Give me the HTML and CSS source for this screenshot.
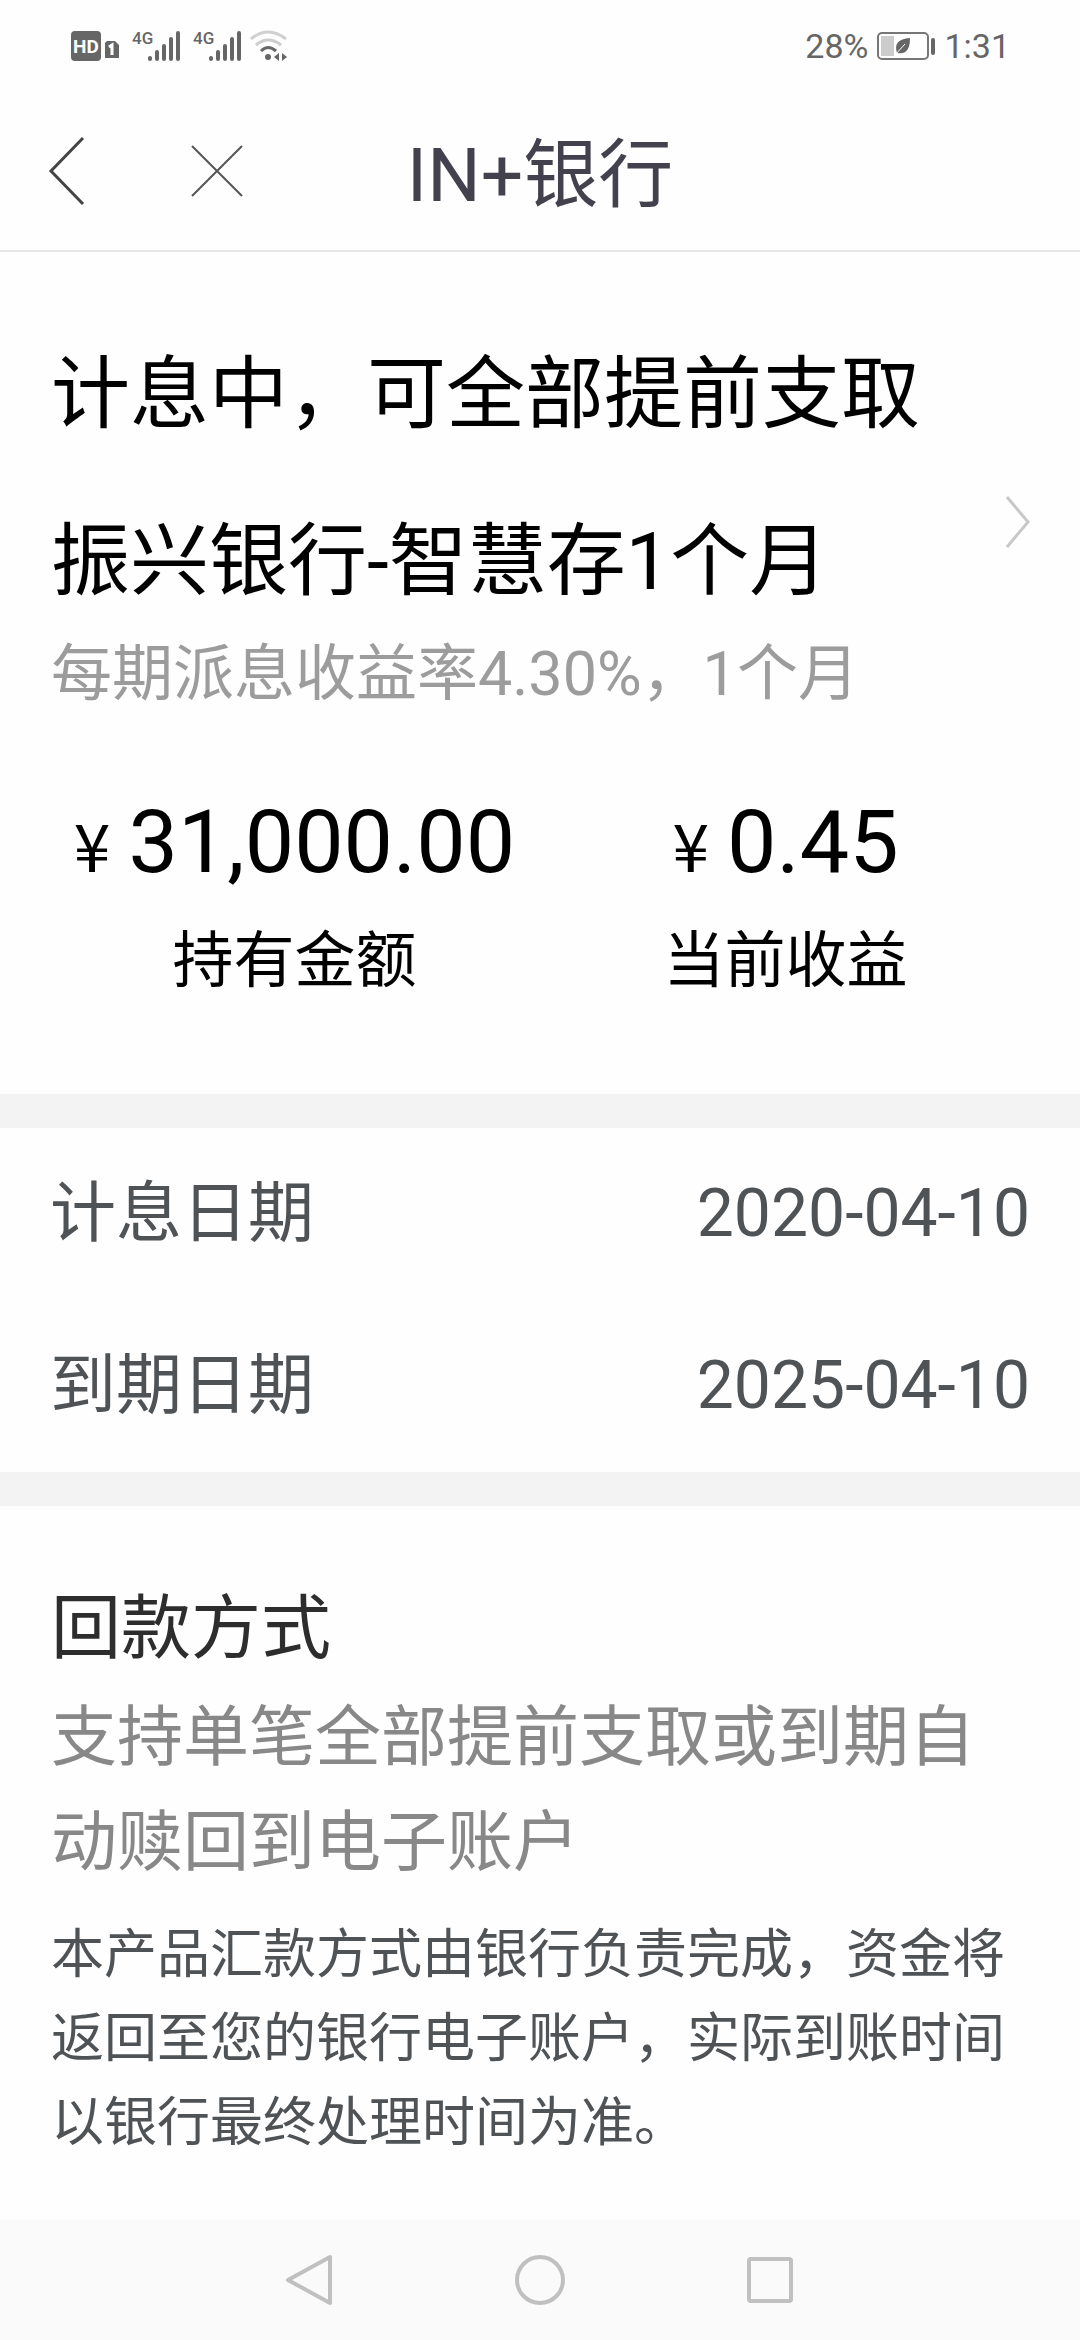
FILE: index.html
```html
<!DOCTYPE html>
<html lang="zh-CN">
<head>
    <meta charset="UTF-8">
    <meta name="viewport" content="width=device-width, initial-scale=1.0">
    <title>IN+银行</title>
    <link rel="stylesheet" href="styles.css">
</head>
<body>
    <!-- 状态栏 -->
    <div class="status-bar">
        <div class="status-left">
            <svg class="icon-hd" width="50" height="32" viewBox="0 0 50 32">
                <rect x="1" y="1" width="30" height="30" rx="4" fill="#666"/>
                <text x="16" y="23" text-anchor="middle" class="hd-text">HD</text>
                <path d="M37 11h8l4 4v13h-14v-15z" fill="#666"/>
                <path d="M39 17l3-2v10" fill="none" stroke="#fff" stroke-width="3"/>
            </svg>
            <div class="signal">
                <span>4G</span>
                <svg width="34" height="32" viewBox="0 0 34 32" stroke="#666" stroke-width="4" stroke-linecap="round">
                    <path d="M3 28v1M10 22v7M17 16v13M24 9v20M31 3v26"/>
                </svg>
            </div>
            <div class="signal">
                <span>4G</span>
                <svg width="34" height="32" viewBox="0 0 34 32" stroke="#666" stroke-width="4" stroke-linecap="round">
                    <path d="M3 28v1M10 22v7M17 16v13M24 9v20M31 3v26"/>
                </svg>
            </div>
            <svg class="icon-wifi" width="38" height="32" viewBox="0 0 38 32" fill="none" stroke-width="3">
                <path d="M1 9Q18-5 36 9" stroke="#d0d0d0"/>
                <path d="M6 15Q18 5 31 15" stroke="#ccc"/>
                <path d="M11 21Q18 14 26 21" stroke="#666"/>
                <circle cx="18" cy="27" r="3" fill="#666"/>
                <path d="M29 23v8l-5-4zM32 23v8l5-4z" fill="#666"/>
            </svg>
        </div>
        <div class="status-right">
            <span>28%</span>
            <svg width="60" height="30" viewBox="0 0 60 30">
                <rect x="2" y="2" width="50" height="26" rx="4" fill="none" stroke="#777" stroke-width="2"/>
                <rect x="5" y="5" width="13" height="20" fill="#ccc"/>
                <path d="M34 7C22 8 18 13 21 22c10 2 13-5 13-15z" fill="#666"/>
                <path d="M19 24L29 13" stroke="#fff" stroke-width="1"/>
                <rect x="55" y="7" width="4" height="17" rx="2" fill="#666"/>
            </svg>
            <span>1:31</span>
        </div>
    </div>

    <!-- 标题栏 -->
    <header class="header">
        <div class="header-buttons">
            <button class="icon-btn" aria-label="返回">
                <svg width="38" height="70" viewBox="0 0 38 70" fill="none" stroke="#444" stroke-width="3">
                    <path d="M35 2L3 35l32 33"/>
                </svg>
            </button>
            <button class="icon-btn" aria-label="关闭">
                <svg width="52" height="52" viewBox="0 0 52 52" fill="none" stroke="#555" stroke-width="2">
                    <path d="M1 1l50 50M51 1L1 51"/>
                </svg>
            </button>
        </div>
        <h1>IN+银行</h1>
    </header>

    <main>
        <section class="summary">
            <a href="#" class="product">
                <div class="product-info">
                    <div class="product-title">计息中，可全部提前支取</div>
                    <div class="product-title">振兴银行-智慧存1个月</div>
                    <div class="product-rate">每期派息收益率4.30%，1个月</div>
                </div>
                <svg width="28" height="54" viewBox="0 0 28 54" fill="none" stroke="#c8c8c8" stroke-width="3">
                    <path d="M4 2l21 25L4 52"/>
                </svg>
            </a>
            <div class="amounts">
                <div class="amount">
                    <div class="amount-value"><span class="yen">¥</span>31,000.00</div>
                    <div class="amount-label">持有金额</div>
                </div>
                <div class="amount">
                    <div class="amount-value"><span class="yen">¥</span>0.45</div>
                    <div class="amount-label">当前收益</div>
                </div>
            </div>
        </section>

        <dl class="dates">
            <div class="date-row">
                <dt>计息日期</dt>
                <dd>2020-04-10</dd>
            </div>
            <div class="date-row">
                <dt>到期日期</dt>
                <dd>2025-04-10</dd>
            </div>
        </dl>

        <section class="repay">
            <h2>回款方式</h2>
            <p class="repay-type">支持单笔全部提前支取或到期自动赎回到电子账户</p>
            <p class="repay-note">本产品汇款方式由银行负责完成，资金将返回至您的银行电子账户，实际到账时间以银行最终处理时间为准。</p>
        </section>
    </main>

    <!-- 系统导航键 -->
    <nav class="nav-bar">
        <button class="nav-btn" aria-label="后退">
            <svg width="52" height="52" viewBox="0 0 52 52">
                <path d="M46 3v46L4 26z"/>
            </svg>
        </button>
        <button class="nav-btn" aria-label="主屏幕">
            <svg width="52" height="52" viewBox="0 0 52 52">
                <circle cx="26" cy="26" r="23"/>
            </svg>
        </button>
        <button class="nav-btn" aria-label="最近任务">
            <svg width="52" height="52" viewBox="0 0 52 52">
                <rect x="5" y="5" width="42" height="42" rx="2"/>
            </svg>
        </button>
    </nav>
</body>
</html>
```
FILE: styles.css
```css
* {
    box-sizing: border-box;
}

body {
    font-family: Roboto, "Noto Sans CJK SC", sans-serif;
    background-color: #fefefe;
    color: #000;
    display: flex;
    flex-direction: column;
    min-height: 100vh;
    margin: 0;
}

h1, h2, p, dl, dd {
    margin: 0;
    font-weight: 400;
}

button {
    background: none;
    border: none;
    padding: 0;
    cursor: pointer;
}

svg {
    display: block;
    flex-shrink: 0;
}

/* 状态栏 */
.status-bar {
    display: flex;
    justify-content: space-between;
    align-items: center;
    height: 92px;
    padding: 0 70px;
    color: #666;
}

.status-left,
.status-right {
    display: flex;
    align-items: center;
}

.status-left {
    gap: 12px;
}

.status-right {
    gap: 8px;
    font-size: 34px;
    line-height: 40px;
}

.hd-text {
    font-size: 19px;
    font-weight: 700;
    fill: #fff;
}

.signal {
    display: flex;
    align-items: flex-start;
}

.signal span {
    font-size: 17px;
    font-weight: 500;
    line-height: 16px;
    width: 16px;
}

.signal svg {
    margin-left: -1px;
}

.icon-wifi {
    margin-left: -4px;
}

/* 标题栏 */
.header {
    display: grid;
    grid-template-columns: 1fr auto 1fr;
    align-items: center;
    height: 160px;
    padding: 0 48px;
    border-bottom: 2px solid #e6e6e6;
}

.header h1 {
    padding-top: 8px;
    font-size: 75px;
    line-height: 90px;
    color: #43414d;
}

.header-buttons {
    display: flex;
    align-items: center;
    gap: 105px;
}

/* 产品信息 */
.summary {
    padding: 60px 49px 97px;
}

.product {
    display: flex;
    align-items: center;
    justify-content: space-between;
    padding-left: 2px;
    color: inherit;
    text-decoration: none;
}

.product-info {
    padding-bottom: 30px;
}

.product-title {
    font-size: 79px;
    line-height: 167px;
}

.product-rate {
    font-size: 61px;
    line-height: 56px;
    color: #9c9c9c;
}

.amounts {
    display: flex;
    margin-top: 58px;
    text-align: center;
}

.amount {
    flex: 1;
}

.amount-value {
    font-size: 88px;
    line-height: 104px;
}

.yen {
    font-family: "Noto Sans CJK SC", sans-serif;
    font-size: 66px;
    line-height: 66px;
    margin-right: 18px;
}

.amount-label {
    margin-top: 31px;
    font-size: 61px;
    line-height: 72px;
}

/* 日期 */
.dates {
    border-top: 34px solid #f3f3f3;
    border-bottom: 34px solid #f3f3f3;
    padding: 0 50px;
    font-size: 66px;
    color: #505356;
}

.date-row {
    display: flex;
    justify-content: space-between;
    line-height: 172px;
}

/* 回款方式 */
.repay {
    padding: 83px 51px 50px;
}

.repay h2 {
    font-size: 70px;
    line-height: 80px;
    color: #2d2d2d;
}

.repay-type {
    margin-top: 16px;
    font-size: 66px;
    line-height: 105px;
    color: #888;
}

.repay-note {
    margin-top: 18px;
    font-size: 53px;
    line-height: 84px;
    color: #505356;
}

/* 系统导航键 */
.nav-bar {
    display: flex;
    justify-content: center;
    margin-top: auto;
    height: 120px;
    background-color: #fafafa;
}

.nav-btn {
    display: flex;
    align-items: center;
    justify-content: center;
    width: 230px;
}

.nav-btn svg {
    fill: none;
    stroke: #c0c0c0;
    stroke-width: 4;
    stroke-linejoin: round;
}
```
